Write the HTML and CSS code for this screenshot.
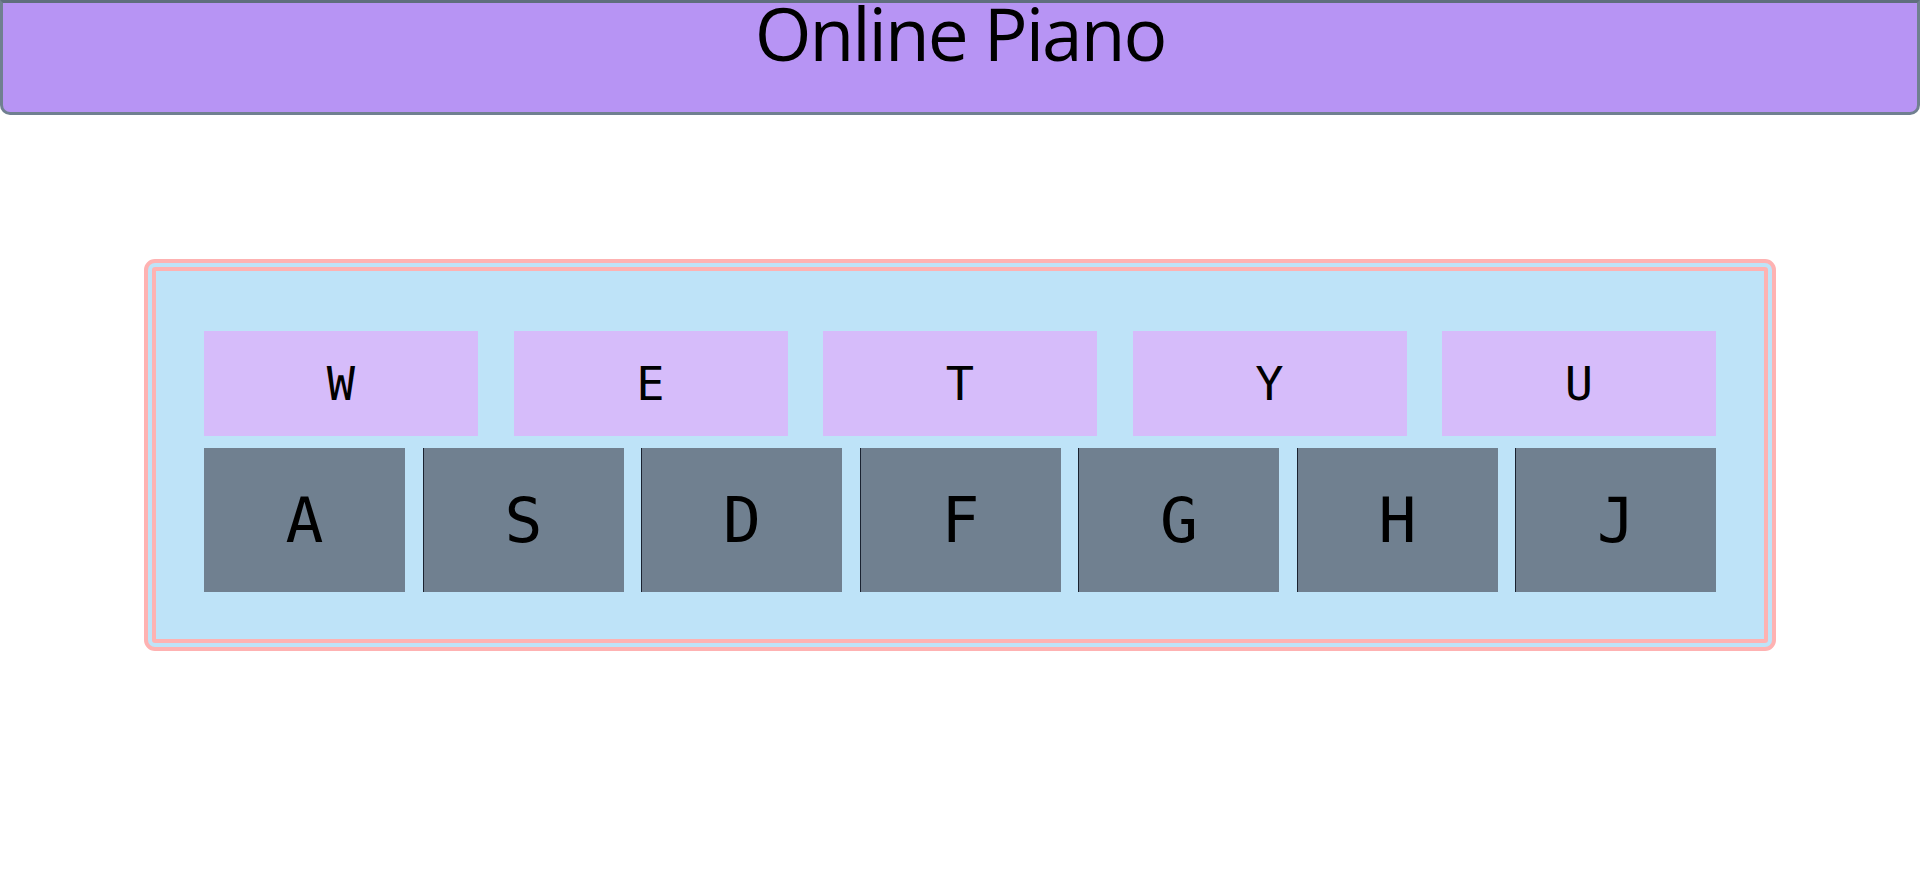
FILE: index.html
```html
<!DOCTYPE html>
<html lang="en">
<head>
<meta charset="utf-8">
<title>Online Piano</title>
<link rel="stylesheet" href="styles.css">
</head>
<body>
<header class="header">
  <h1 class="title">Online Piano</h1>
</header>
<main class="piano">
  <div class="row row-top">
    <div class="key key-top">W</div>
    <div class="key key-top">E</div>
    <div class="key key-top">T</div>
    <div class="key key-top">Y</div>
    <div class="key key-top">U</div>
  </div>
  <div class="row row-bottom">
    <div class="key key-bottom key-first">A</div>
    <div class="key key-bottom">S</div>
    <div class="key key-bottom">D</div>
    <div class="key key-bottom">F</div>
    <div class="key key-bottom">G</div>
    <div class="key key-bottom">H</div>
    <div class="key key-bottom">J</div>
  </div>
</main>
</body>
</html>
```

FILE: styles.css
```css
html, body {
  margin: 0;
  padding: 0;
  background: #ffffff;
}

body {
  font-family: "Open Sans", "Noto Sans", sans-serif;
}

.header {
  box-sizing: border-box;
  width: 100%;
  height: 115px;
  background: #b794f4;
  border: 3px solid #708090;
  border-top-color: #5f6e7d;
  border-radius: 0 0 10px 10px;
}

.title {
  margin: 0;
  font-family: "Open Sans", "Noto Sans", sans-serif;
  font-weight: 400;
  font-size: 73px;
  letter-spacing: -2px;
  line-height: 60px;
  text-align: center;
  color: #000;
}

.piano {
  box-sizing: border-box;
  width: 1632px;
  margin: 144px auto 0;
  padding: 60px 48px 47px;
  background: #bee3f8;
  border: 12px double #feb2b2;
  border-radius: 11px;
  display: flex;
  flex-direction: column;
  gap: 12px;
}

.row {
  display: flex;
  justify-content: space-between;
}

.key {
  box-sizing: border-box;
  display: flex;
  align-items: center;
  justify-content: center;
  font-family: "DejaVu Sans Mono", monospace;
  color: #000;
}

.key-top {
  width: 274px;
  height: 105px;
  background: #d6bcfa;
  font-size: 47px;
}

.key-bottom {
  width: 201px;
  height: 144px;
  background: #708090;
  border-left: 1px solid #1a2230;
  font-size: 63px;
}

.key-first {
  border-left: none;
}
```
